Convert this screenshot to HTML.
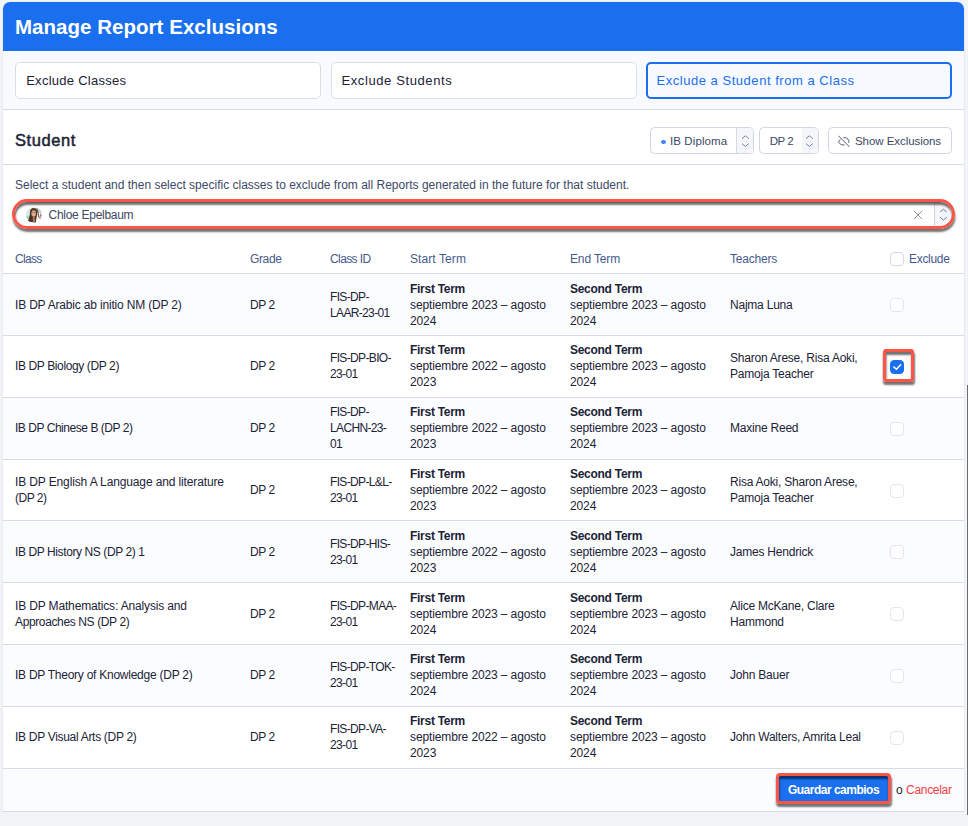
<!DOCTYPE html>
<html lang="es">
<head>
<meta charset="utf-8">
<title>Manage Report Exclusions</title>
<style>
*{box-sizing:border-box;margin:0;padding:0}
html,body{width:968px;height:826px;overflow:hidden}
body{background:#f1f3f7;font-family:"Liberation Sans",sans-serif;color:#1b2336;font-size:12px;position:relative}
.modal{position:absolute;left:3px;top:2px;width:961px;height:809px;background:#fff;border-radius:7px 7px 0 0;overflow:hidden;box-shadow:0 1px 0 #d6dae6, 0 0 0 .6px #e3e6ee}
.mhead{height:49px;background:#1a6fee;color:#fff;font-weight:bold;font-size:20.5px;line-height:50px;padding-left:12px;letter-spacing:.03px}
.tabs{height:59px;background:#f8fafe;border-bottom:1px solid #d8dce7;position:relative}
.tab{position:absolute;top:11px;height:37px;width:306px;background:#fff;border:1px solid #d8dde8;border-radius:5px;font-size:13px;line-height:36px;padding-left:11px;color:#1b2336;letter-spacing:.26px}
.tab.t1{left:12px;padding-left:10.2px}
.tab.t2{left:328px;letter-spacing:.61px;padding-left:9.4px}
.tab.t3{left:643px;width:306px;border:2px solid #1a6fee;color:#1a6fee;background:#f6f9ff;line-height:34px;padding-left:8.5px;letter-spacing:.53px}
.sect{height:55px;border-bottom:1px solid #d8dce7;position:relative}
.sect h2{position:absolute;left:12px;top:20px;font-size:16.5px;line-height:20px;font-weight:normal;-webkit-text-stroke:.5px #1b2336;color:#1b2336;letter-spacing:.58px}
.ctl{position:absolute;top:17.3px;height:27.2px;border:1px solid #d0d6e3;border-radius:4.5px;background:#fff;font-size:11.5px;line-height:26.5px;color:#3b4763;white-space:nowrap}
.ctl .arr{position:absolute;right:0;top:0;bottom:0;width:16px;border-left:1px solid #d5dae6;background:#f5f6fa;border-radius:0 3px 3px 0}
.ctl svg{position:absolute}
.desc{position:absolute;left:12px;top:175px;font-size:12px;line-height:16px;color:#3d4966;letter-spacing:0;white-space:nowrap}
.selbox{position:absolute;left:12px;top:200px;width:937px;height:26px;border:1px solid #d5dae6;border-radius:13px;background:#fff}
.hl{position:absolute;border:3.5px solid #fa5546;box-shadow:.5px 3px 2px rgba(0,0,0,.55), inset .5px 3px 2px rgba(0,0,0,.55);pointer-events:none}
table{position:absolute;left:0;top:243px;width:961px;border-collapse:collapse;table-layout:fixed}
th{height:28px;text-align:left;font-weight:normal;font-size:12px;color:#465a8c;padding:0 0 0 12px;border-bottom:1px solid #d8dce7;letter-spacing:-.3px;white-space:nowrap}
td{height:62px;padding:2px 0 0 12px;font-size:12px;line-height:16px;color:#1b2336;border-bottom:1px solid #d8dce7;vertical-align:middle;letter-spacing:-.18px;white-space:nowrap}
td:nth-child(3){letter-spacing:-.65px}
td:nth-child(1){letter-spacing:-.24px}
td:nth-child(4),td:nth-child(5){letter-spacing:-.12px}
td:nth-child(6){letter-spacing:-.22px}
td:nth-child(2){letter-spacing:-.4px}
th:last-child,td:last-child{padding-left:26px}
th:nth-child(1){letter-spacing:-.7px}
th:nth-child(2){letter-spacing:-.37px}
th:nth-child(3){letter-spacing:-.6px}
th:nth-child(4){letter-spacing:.09px}
th:nth-child(5){letter-spacing:-.14px}
th:nth-child(6){letter-spacing:-.21px}
th:nth-child(7){letter-spacing:-.31px}
tbody tr:nth-child(odd) td{background:#fbfcfe}
tr.r4 td{height:61px}
tbody tr:nth-child(2) td,tbody tr:nth-child(3) td,tbody tr:nth-child(n+7) td{padding-top:0;padding-bottom:1px}
tbody tr:nth-child(4) td{padding-top:1px}
tbody tr td:last-child{padding:1px 0 0 26px}
tbody tr.r4 td:last-child{padding-top:2px}
td b{font-weight:bold;letter-spacing:-.28px}
.cb{display:inline-block;width:14px;height:14px;border:1px solid #d5d9e3;border-radius:4px;background:#fff;vertical-align:middle}
td .cb{display:block;border-color:#e3e6ed}
.cb.on{background:#1a6fee;border-color:#1a6fee;position:relative}
.foot{position:absolute;left:0;top:766px;width:961px;height:43px;background:#fbfcfe;border-top:1px solid #d8dce7}
.btn{position:absolute;left:775px;top:7px;width:111px;height:27px;background:#1a6fee;color:#fff;font-weight:bold;font-size:12px;line-height:28px;text-align:center;border-radius:3px;letter-spacing:-.5px}
.or{position:absolute;left:893px;top:13px;font-size:12px;line-height:16px;color:#1b2336}
.cancel{position:absolute;left:903px;top:13px;font-size:12px;line-height:16px;color:#f43d44;letter-spacing:-.29px}
.scroll{position:absolute;left:966px;top:384px;width:2px;height:431px;background:linear-gradient(90deg,#f6f6f8 0 .8px,#6b6b6d .8px);border-top:1px solid #f6f6f8}
</style>
</head>
<body>
<div class="modal">
  <div class="mhead">Manage Report Exclusions</div>
  <div class="tabs">
    <div class="tab t1">Exclude Classes</div>
    <div class="tab t2">Exclude Students</div>
    <div class="tab t3">Exclude a Student from a Class</div>
  </div>
  <div class="sect">
    <h2>Student</h2>
    <div class="ctl" style="left:647px;width:104px;padding-left:19px;letter-spacing:.1px">
      <span style="position:absolute;left:10px;top:11.3px;width:4.8px;height:4.1px;border-radius:50%;background:#3f83f2"></span>IB Diploma
      <span class="arr" style="width:17.5px"><svg width="9" height="14" viewBox="0 0 9 14" style="left:4px;top:5.7px" fill="none" stroke="#6d83b8" stroke-width="1"><path d="M1 4.6 L4.4 1.8 L7.8 4.6"/><path d="M1 9.6 L4.4 12.4 L7.8 9.6"/></svg></span>
    </div>
    <div class="ctl" style="left:756px;width:60px;padding-left:9.8px;letter-spacing:-.5px">DP 2
      <span class="arr" style="width:16.5px;border-left:0"><svg width="9" height="14" viewBox="0 0 9 14" style="left:3.6px;top:5.7px" fill="none" stroke="#6d83b8" stroke-width="1"><path d="M1 4.6 L4.4 1.8 L7.8 4.6"/><path d="M1 9.6 L4.4 12.4 L7.8 9.6"/></svg></span>
    </div>
    <div class="ctl" style="left:824.5px;width:124px;padding-left:26.5px;letter-spacing:-.06px">
      <svg width="14" height="14" viewBox="0 0 14 14" style="left:8.5px;top:6px" fill="none" stroke="#46516e" stroke-width=".95" stroke-linecap="round"><path d="M1.7 2.1 L12.2 12.6"/><path d="M3 5.8 C1.2 7.3 1.6 8.6 2.6 9.4 C4 10.7 5.6 11.3 7.3 11"/><path d="M6.8 3.6 C9 3.3 11 4.5 11.8 6.5 C12 7.2 11.9 8 11.5 8.5"/></svg>Show Exclusions
    </div>
  </div>
  <div class="desc">Select a student and then select specific classes to exclude from all Reports generated in the future for that student.</div>
  <div class="selbox">
    <svg width="16" height="16" viewBox="0 0 16 16" style="position:absolute;left:10px;top:4px;filter:blur(.35px)">
      <defs><clipPath id="av"><circle cx="8" cy="8" r="8"/></clipPath></defs>
      <g clip-path="url(#av)">
        <rect width="16" height="16" fill="#e9f1ee"/>
        <rect x="0" y="2" width="4" height="9" fill="#d6ebe6"/>
        <circle cx="1.8" cy="10.5" r="1.6" fill="#86d6dc"/>
        <rect x="11.5" y="1" width="5" height="5" fill="#b5dccc"/>
        <rect x="11" y="6" width="5" height="10" fill="#fbfbfb"/>
        <path d="M4.8 2.2 C6.5 .4 10.4 .6 11 3.6 C11.6 7 10.4 10 9.8 15.6 L3 14.6 C1.8 12.6 3.8 9.4 3.9 6.4 C3.9 4.4 4.1 3.1 4.8 2.2Z" fill="#4e3123"/>
        <path d="M10.4 1.6 C12.6 3.6 11.6 7.6 13.2 10.4" fill="none" stroke="#7a5440" stroke-width="1.3"/>
        <ellipse cx="7.7" cy="6.4" rx="2.3" ry="3.1" fill="#d7a789"/>
        <path d="M6.8 9.4 L8.8 9.4 L8.9 15.5 L6.9 15.5Z" fill="#b07c5c"/>
        <ellipse cx="7.7" cy="8" rx="1" ry=".6" fill="#e9b4b0"/>
        <rect x="6" y="5.2" width="3.6" height=".8" fill="#8a6450" opacity=".7"/>
        <rect x="14.2" y="6.8" width="1.3" height="3" fill="#8a62a6"/>
        <circle cx="14" cy="11" r="1" fill="#f0775f"/>
        <path d="M1.5 13.5 L4 12 L5 15 L2.5 15.5Z" fill="#7a2d22"/>
      </g>
    </svg>
    <span style="position:absolute;left:32.5px;top:4px;font-size:12px;line-height:16px;color:#3b4763;letter-spacing:-.28px">Chloe Epelbaum</span>
    <svg width="10" height="10" viewBox="0 0 10 10" style="position:absolute;left:896.6px;top:6.8px" fill="none" stroke="#939393" stroke-width="1"><path d="M1 1 L9 9 M9 1 L1 9"/></svg>
    <span style="position:absolute;right:0;top:0;bottom:0;width:17.5px;border-left:1px solid #d0d6e3;border-radius:0 13px 13px 0;background:#f5f6fa"></span>
    <svg width="9" height="14" viewBox="0 0 9 14" style="position:absolute;left:923px;top:5px" fill="none" stroke="#6d83b8" stroke-width="1"><path d="M1 4 L4.4 1.2 L7.8 4"/><path d="M1 9.2 L4.4 12 L7.8 9.2"/></svg>
  </div>
  <div class="hl" style="left:9px;top:196.7px;width:943px;height:30.6px;border-radius:16px"></div>
  <table>
    <colgroup><col style="width:235px"><col style="width:80px"><col style="width:80px"><col style="width:160px"><col style="width:160px"><col style="width:146px"><col style="width:100px"></colgroup>
    <thead><tr><th>Class</th><th>Grade</th><th>Class ID</th><th>Start Term</th><th>End Term</th><th>Teachers</th><th><span class="cb" style="margin-right:5px;position:relative;top:0;vertical-align:-3px"></span>Exclude</th></tr></thead>
    <tbody>
      <tr><td style="letter-spacing:-.18px">IB DP Arabic ab initio NM (DP 2)</td><td>DP 2</td><td>FIS-DP-<br>LAAR-23-01</td><td><b>First Term</b><br>septiembre 2023 – agosto<br>2024</td><td><b>Second Term</b><br>septiembre 2023 – agosto<br>2024</td><td>Najma Luna</td><td><span class="cb"></span></td></tr>
      <tr><td style="letter-spacing:-.38px">IB DP Biology (DP 2)</td><td>DP 2</td><td>FIS-DP-BIO-<br>23-01</td><td><b>First Term</b><br>septiembre 2022 – agosto<br>2023</td><td><b>Second Term</b><br>septiembre 2023 – agosto<br>2024</td><td>Sharon Arese, Risa Aoki,<br>Pamoja Teacher</td><td><span class="cb on"><svg width="14" height="14" viewBox="0 0 14 14" style="position:absolute;left:-1px;top:-1px" fill="none" stroke="#fff" stroke-width="1.4"><path d="M3.4 6.6 L6.5 9.2 L11 4.2"/></svg></span></td></tr>
      <tr><td style="letter-spacing:-.46px">IB DP Chinese B (DP 2)</td><td>DP 2</td><td>FIS-DP-<br>LACHN-23-<br>01</td><td><b>First Term</b><br>septiembre 2022 – agosto<br>2023</td><td><b>Second Term</b><br>septiembre 2023 – agosto<br>2024</td><td>Maxine Reed</td><td><span class="cb"></span></td></tr>
      <tr class="r4"><td style="letter-spacing:-.13px">IB DP English A Language and literature<br><span style="letter-spacing:-.5px">(DP 2)</span></td><td>DP 2</td><td>FIS-DP-L&amp;L-<br>23-01</td><td><b>First Term</b><br>septiembre 2022 – agosto<br>2023</td><td><b>Second Term</b><br>septiembre 2023 – agosto<br>2024</td><td>Risa Aoki, Sharon Arese,<br>Pamoja Teacher</td><td><span class="cb"></span></td></tr>
      <tr><td style="letter-spacing:-.4px">IB DP History NS (DP 2) 1</td><td>DP 2</td><td>FIS-DP-HIS-<br>23-01</td><td><b>First Term</b><br>septiembre 2022 – agosto<br>2023</td><td><b>Second Term</b><br>septiembre 2023 – agosto<br>2024</td><td>James Hendrick</td><td><span class="cb"></span></td></tr>
      <tr><td style="letter-spacing:-.15px">IB DP Mathematics: Analysis and<br><span style="letter-spacing:-.37px">Approaches NS (DP 2)</span></td><td>DP 2</td><td>FIS-DP-MAA-<br>23-01</td><td><b>First Term</b><br>septiembre 2023 – agosto<br>2024</td><td><b>Second Term</b><br>septiembre 2023 – agosto<br>2024</td><td>Alice McKane, Clare<br>Hammond</td><td><span class="cb"></span></td></tr>
      <tr><td style="letter-spacing:-.25px">IB DP Theory of Knowledge (DP 2)</td><td>DP 2</td><td>FIS-DP-TOK-<br>23-01</td><td><b>First Term</b><br>septiembre 2023 – agosto<br>2024</td><td><b>Second Term</b><br>septiembre 2023 – agosto<br>2024</td><td>John Bauer</td><td><span class="cb"></span></td></tr>
      <tr><td style="letter-spacing:-.3px">IB DP Visual Arts (DP 2)</td><td>DP 2</td><td>FIS-DP-VA-<br>23-01</td><td><b>First Term</b><br>septiembre 2022 – agosto<br>2023</td><td><b>Second Term</b><br>septiembre 2023 – agosto<br>2024</td><td>John Walters, Amrita Leal</td><td><span class="cb"></span></td></tr>
    </tbody>
  </table>
  <div class="hl" style="left:879.8px;top:346.7px;width:31.1px;height:33.6px;border-radius:3px"></div>
  <div class="foot">
    <div class="btn">Guardar cambios</div>
    <span class="or">o</span><span class="cancel">Cancelar</span>
  </div>
  <div class="hl" style="left:772.9px;top:771.2px;width:115.6px;height:31.2px;border-radius:4px"></div>
</div>
<div class="scroll"></div>
</body>
</html>
